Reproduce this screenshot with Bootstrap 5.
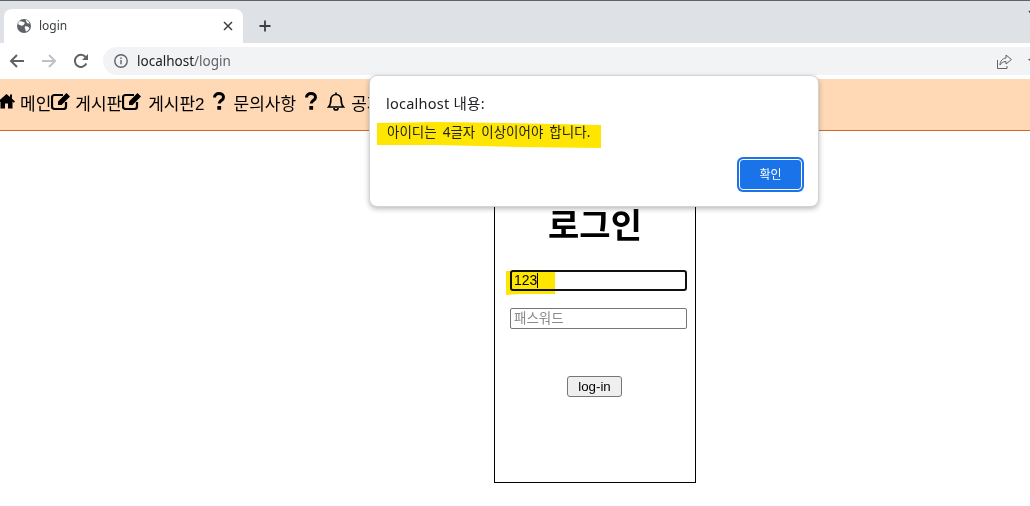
<!DOCTYPE html>
<html lang="ko">
<head>
<meta charset="utf-8">
<title>login</title>
<link href="https://cdn.jsdelivr.net/npm/bootstrap@5.3.0/dist/css/bootstrap.min.css" rel="stylesheet">
<style>
html,body{height:506px;overflow:hidden;background:#fff;}
body{font-family:"Liberation Sans","Noto Sans CJK KR",sans-serif;position:relative;color:#000;}
.ui-font{font-family:"Noto Sans","Noto Sans CJK KR",sans-serif;}
.tabstrip{height:43px;background:#dee1e6;border-top:1px solid #5f6368;padding-left:4px;}
.tabitem{width:239px;height:34px;background:#fff;border-radius:8px 8px 0 0;padding:0 10px 0 12px;}
.tabtitle{font-size:12px;color:#3c4043;margin-left:7px;}
.newtab{margin:8px 0 0 15px;}
.edgechevron{margin:9px -8px 0 auto;}
.toolbar{height:36px;background:#fff;padding-left:9px;}
.navicon{width:16px;height:16px;margin-right:16px;}
.addressbar{height:28px;background:#f1f3f4;border-radius:14px 0 0 14px;margin-left:-2px;padding-left:11px;font-size:13.5px;color:#5f6368;}
.addressbar b{font-weight:400;color:#202124;}
.urltext{margin-left:9px;}
.sharebox{margin-right:16px;}
.edgestar{margin-right:-14px;}
.sitenav{height:52px;background:#ffd8b5;border-bottom:1px solid #d2691e;font-size:17px;line-height:24px;list-style:none;margin:0;padding-left:0;}
.sitenav li{white-space:nowrap;}
.mi{flex:none;display:block;margin-top:-7px;}
.itemtext{margin-left:5px;}
.loginbox{width:202px;height:323px;margin:29px 0 0 494px;border:1px solid #000;padding:0 8px 0 15px;}
.logintitle{font-size:34px;font-weight:700;line-height:40px;text-align:center;margin:45px 0 24px;padding-right:7px;}
.fieldrow{position:relative;display:block;}
.plainfield{display:block;width:177px;height:21px;border:1px solid #767676;border-radius:2px;padding:0 3px;font-size:14px;background:#fff;color:#000;font-family:"Liberation Sans","Noto Sans CJK KR",sans-serif;}
.plainfield::placeholder{color:#8a8a8a;font-size:13.5px;}
.focusfield{border:2px solid #101010;border-radius:3px;padding:0 2px;margin-bottom:17px;}
.caretbar{position:absolute;left:27px;top:3px;width:1px;height:15px;background:#000;}
.hlfield{position:absolute;left:-4px;top:-1px;mix-blend-mode:multiply;}
.submitbtn{display:block;width:55px;height:21px;padding:0;margin:47px 0 0 57px;font-size:13.33px;line-height:19px;color:#000;background:#efefef;border:1px solid #767676;border-radius:3px;}
.alertbox{position:absolute;left:369px;top:75px;width:450px;height:132px;background:#fff;border:1px solid #d3d3d3;border-radius:8px;box-shadow:0 2px 5px rgba(60,64,67,.35);padding:0;}
.alerttitle{position:relative;font-size:14.5px;letter-spacing:.25px;line-height:20px;color:#202124;padding:17px 0 0 16px;}
.alertmsg{position:relative;font-size:13.5px;word-spacing:2.5px;line-height:18px;color:#202124;padding:10px 0 0 17px;}
.hlmsg{position:absolute;left:7px;top:46px;}
.okbtn{position:absolute;left:369px;top:83px;width:63px;height:31px;padding:0;font-size:12px;line-height:1;color:#fff;background:#1a73e8;border:1px solid #fff;border-radius:4px;box-shadow:0 0 0 2px #1a73e8;}
.okbtn:hover{background:#1a73e8;color:#fff;border-color:#fff;}
</style>
</head>
<body>
<div class="tabstrip d-flex align-items-end ui-font">
  <div class="tabitem d-flex align-items-center">
    <svg width="16" height="16" viewBox="0 0 16 16"><circle cx="8" cy="8" r="7" fill="#5f6368"/><path d="M3 3.500C5 3 6 4 7.500 4S9 5.500 8 6.500 6.500 8 5 7.500 2.500 6.500 2 6zM9 8.500c1.500-.5 3 0 4 1s-1 3.500-3 4c-.5-1-.5-2-1-3s-.5-1.500 0-2zM10 2c1 0 3 1.500 3.500 3.500-1.500 0-2.500-.5-3-1.500S9.500 2.500 10 2z" fill="#fff"/></svg>
    <span class="tabtitle flex-grow-1">login</span>
    <svg width="10" height="10" viewBox="0 0 10 10" stroke="#3c4043" stroke-width="1.500"><path d="M1 1l8 8M9 1l-8 8"/></svg>
  </div>
  <svg class="newtab align-self-center" width="14" height="14" viewBox="0 0 14 14" stroke="#3c4043" stroke-width="1.800"><path d="M7 1.500v11M1.500 7h11"/></svg>
  <svg class="edgechevron align-self-start" width="10" height="6" viewBox="0 0 10 6" fill="none" stroke="#3c4043" stroke-width="1.500"><path d="M1 1l4 4 4-4"/></svg>
</div>
<div class="toolbar d-flex align-items-center ui-font">
  <svg class="navicon" viewBox="0 0 16 16" fill="none" stroke="#5f6368" stroke-width="2"><path d="M15 8H2M8 2L2 8l6 6"/></svg>
  <svg class="navicon" viewBox="0 0 16 16" fill="none" stroke="#bdc1c6" stroke-width="2"><path d="M1 8h13M8 2l6 6-6 6"/></svg>
  <svg class="navicon" viewBox="0 0 16 16" fill="none" stroke="#5f6368" stroke-width="2"><path d="M13.300 10.500A6 6 0 1 1 12.500 4"/><path d="M15 1v6H9z" fill="#5f6368" stroke="none"/></svg>
  <div class="addressbar d-flex align-items-center flex-grow-1">
    <svg width="14" height="14" viewBox="0 0 14 14"><circle cx="7" cy="7" r="6.200" fill="none" stroke="#5f6368" stroke-width="1.400"/><path d="M6.300 6h1.400v4.200H6.300zM6.300 3.500h1.400v1.400H6.300z" fill="#5f6368"/></svg>
    <span class="urltext flex-grow-1"><b>localhost</b>/login</span>
    <svg class="sharebox" width="15" height="15" viewBox="0 0 15 15" fill="none" stroke="#5f6368" stroke-width="1"><path d="M.5 6v8.500h9.500V12"/><path d="M9 1l5.500 4.500L9 10V7.500C6 7.500 4 9 3 11c0-4 2.500-6.500 6-7z"/></svg>
    <svg class="edgestar" width="16" height="16" viewBox="0 0 16 16" fill="none" stroke="#5f6368" stroke-width="1.200"><path d="M8 1.500l2 4.500 4.800.5-3.600 3.200 1 4.800L8 12.100l-4.200 2.400 1-4.800L1.200 6.500 6 6z"/></svg>
  </div>
</div>
<ul class="sitenav d-flex align-items-center">
  <li class="d-flex align-items-center">
    <svg class="mi" style="margin-left:-2px" width="17" height="16" viewBox="0 0 17 16" fill="#000"><path d="M8.500 1L0 8.500l1.200 1.300L2.500 8.700V15.500h4.500V10.500h3V15.500h4.500V8.700l1.300 1.100L17 8.500l-3-2.700V1.500h-2v2.500z"/></svg>
    <span class="itemtext">메인</span>
  </li>
  <li class="d-flex align-items-center">
    <svg class="mi" width="20" height="18" viewBox="0 0 20 18"><path d="M12 3H3.500A2.500 2.500 0 0 0 1 5.500v9A2.500 2.500 0 0 0 3.500 17h9a2.500 2.500 0 0 0 2.500-2.500V10" fill="none" stroke="#000" stroke-width="2.200"/><path d="M7 9.500L15.500 1 19 4.500 10.500 13H7z" fill="#000"/></svg>
    <span class="itemtext" style="margin-left:4px">게시판</span>
  </li>
  <li class="d-flex align-items-center">
    <svg class="mi" width="20" height="18" viewBox="0 0 20 18"><path d="M12 3H3.500A2.500 2.500 0 0 0 1 5.500v9A2.500 2.500 0 0 0 3.500 17h9a2.500 2.500 0 0 0 2.500-2.500V10" fill="none" stroke="#000" stroke-width="2.200"/><path d="M7 9.500L15.500 1 19 4.500 10.500 13H7z" fill="#000"/></svg>
    <span class="itemtext" style="margin-left:6px">게시판2</span>
  </li>
  <li class="d-flex align-items-center">
    <svg class="mi" style="margin-left:8px" width="12" height="18" viewBox="0 0 12 18"><path d="M1.500 5.500C1.500 3 3.500 1.500 6 1.500S10.500 3 10.500 5.200c0 3.300-4.300 3.300-4.300 6.300" fill="none" stroke="#000" stroke-width="3"/><rect x="4.300" y="14" width="3.800" height="3.800" rx=".6" fill="#000"/></svg>
    <span class="itemtext" style="margin-left:9px">문의사항</span>
  </li>
  <li class="d-flex align-items-center">
    <svg class="mi" style="margin-left:9px" width="12" height="18" viewBox="0 0 12 18"><path d="M1.500 5.500C1.500 3 3.500 1.500 6 1.500S10.500 3 10.500 5.200c0 3.300-4.300 3.300-4.300 6.300" fill="none" stroke="#000" stroke-width="3"/><rect x="4.300" y="14" width="3.800" height="3.800" rx=".6" fill="#000"/></svg>
  </li>
  <li class="d-flex align-items-center">
    <svg class="mi" style="margin-left:10px" width="18" height="19" viewBox="0 0 18 19" fill="none" stroke="#000" stroke-width="1.700"><path d="M1.500 15c2-2 2.300-3.500 2.300-7 0-3 2.200-5.500 5.200-5.500S14.200 5 14.200 8c0 3.500.3 5 2.300 7z"/><path d="M9 .5v2M7 16a2 2 0 0 0 4 0"/></svg>
    <span class="itemtext" style="margin-left:6px">공지사항</span>
  </li>
</ul>
<main class="loginbox">
  <h1 class="logintitle">로그인</h1>
  <form>
    <div class="fieldrow">
      <input class="plainfield focusfield" type="text" value="123" aria-label="아이디">
      <span class="caretbar"></span>
      <svg class="hlfield" width="50" height="26" viewBox="0 0 50 26"><path d="M0 2H49V25L30 25 14 25 0 26z" fill="#ffe600"/></svg>
    </div>
    <input class="plainfield" type="password" placeholder="패스워드" aria-label="패스워드">
    <button class="btn submitbtn" type="button">log-in</button>
  </form>
</main>
<div class="alertbox ui-font">
  <svg class="hlmsg" width="225" height="27" viewBox="0 0 225 27"><path d="M0 1 60 0 130 1 224 3V26L140 25 60 23 0 23z" fill="#ffe600"/></svg>
  <div class="alerttitle">localhost 내용:</div>
  <div class="alertmsg">아이디는 4글자 이상이어야 합니다.</div>
  <button class="btn okbtn" type="button">확인</button>
</div>
</body>
</html>
